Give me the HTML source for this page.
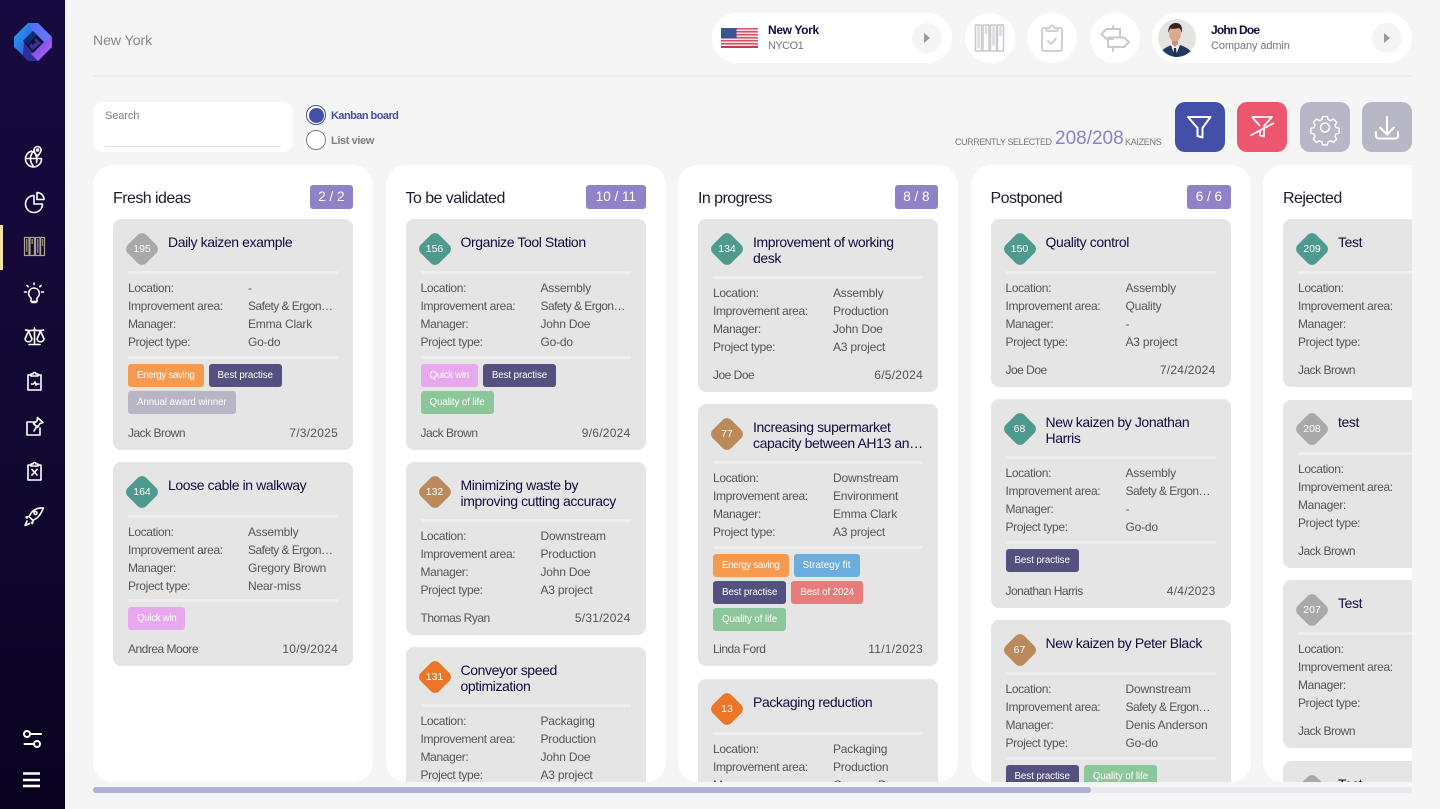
<!DOCTYPE html>
<html><head><meta charset="utf-8"><style>
*{box-sizing:border-box}
html,body{margin:0;padding:0}
body{width:1440px;height:809px;overflow:hidden;background:#f5f5f5;position:relative;font-family:"Liberation Sans",sans-serif;color:#555}
.a{position:absolute;white-space:nowrap}
.side{left:0;top:0;width:65px;height:809px;background:linear-gradient(180deg,#170a40 0%,#120833 50%,#090220 100%)}
.pill{position:absolute;background:#fff;border-radius:25px;height:50px;top:13px}
.arr{position:absolute;width:30px;height:30px;border-radius:50%;background:#f5f5f5;top:23px}
.arr:after{content:"";position:absolute;left:12px;top:10px;border-left:6px solid #999;border-top:5px solid transparent;border-bottom:5px solid transparent}
.n{font-weight:bold;font-size:12px;color:#15093f;letter-spacing:-.35px;line-height:14px}
.s{font-size:11px;color:#777;letter-spacing:-.1px;line-height:14px}
.btn{position:absolute;top:102px;width:50px;height:50px;border-radius:10px}
.clip{position:absolute;left:93px;top:165px;width:1319px;height:617px;overflow:hidden}
.col{position:absolute;top:0;width:280px;height:617px;background:#fff;border-radius:20px}
.h{position:absolute;left:20px;top:24px;font-size:16px;line-height:20px;color:#1c1c2c;letter-spacing:-.55px;white-space:nowrap}
.cnt{position:absolute;top:20px;right:20px;height:24px;line-height:24px;padding:0 8.5px;background:#8f82c6;color:#fff;font-size:13.5px;border-radius:3px;white-space:nowrap}
.c{position:absolute;left:20px;width:240px;background:#e5e5e5;border-radius:8px;padding:0 15px 8px}
.hd{height:52px;position:relative}
.hd.t2{height:57px}
.hd.x{height:53px}
.x+.d+.rows{padding-bottom:4px}
.b{position:absolute;left:1px;top:17px;width:26px;height:26px;border-radius:6px;transform:rotate(45deg)}
.bn{position:absolute;left:-3px;top:23px;width:34px;text-align:center;font-size:10.5px;line-height:14px;color:#fff}
.tt{position:absolute;left:40px;top:15px;font-size:14px;line-height:16px;color:#15093f;letter-spacing:-.4px;white-space:nowrap}
.d{height:3px;background:#eeeeee}
.rows{padding:5px 0;font-size:12px;line-height:18px;color:#555;letter-spacing:-.35px}
.rows div{position:relative;height:18px;white-space:nowrap}
.rows i{font-style:normal;position:absolute;left:120px;top:0;letter-spacing:-.2px}
.rows i.e{letter-spacing:-.55px}
.tags{padding-top:5px;font-size:0}
.tag{display:inline-block;height:23px;line-height:23px;padding:0 9px;margin:0 5px 4px 0;border-radius:3px;color:#fff;font-size:9.8px;letter-spacing:-.1px;vertical-align:top;white-space:nowrap}
.ft{display:flex;justify-content:space-between;font-size:12px;line-height:18px;color:#555;letter-spacing:-.5px;margin-top:5px;white-space:nowrap}
.ft span+span{letter-spacing:.25px}
.tags+.ft{margin-top:6px}
.grey{background:#a9a9a9}.green{background:#4f9a8e}.brown{background:#bb8a5b}.or{background:#ec7527}
.o{background:#f69a50;letter-spacing:-.35px}.p{background:#54507f}.g{background:#b8b5c6}.k{background:#e8a8ee;letter-spacing:-.35px}.q{background:#8cc79a}.u{background:#6badde;letter-spacing:.1px}.r{background:#e87b7c}
</style></head><body>

<div class="a side"></div>
<div class="a" style="left:0;top:225px;width:3px;height:45px;background:#f3e3a6"></div>
<svg class="a" style="left:0;top:0" width="65" height="809" viewBox="0 0 65 809" fill="none" stroke="#fff" stroke-width="1.6" stroke-linecap="round" stroke-linejoin="round">
<defs>
<linearGradient id="l1" x1="0" y1="0" x2="1" y2="1"><stop offset="0" stop-color="#2aa6f7"/><stop offset="1" stop-color="#2b50d0"/></linearGradient>
<linearGradient id="l2" x1="0" y1="0" x2="1" y2="1"><stop offset="0" stop-color="#5a50e0"/><stop offset="1" stop-color="#c060f5"/></linearGradient>
<linearGradient id="l3" x1="0" y1="0" x2="1" y2="1"><stop offset="0" stop-color="#4f6cf5"/><stop offset="1" stop-color="#6f7cf8"/></linearGradient>
</defs>
<g stroke="none">
<path d="M28 23H38L52 37V47L38 61H28L14 47V37Z" fill="#2b2f9c"/>
<path d="M28 23L14 37V47L23 55L24 41L33 32L30 24Z" fill="url(#l1)"/>
<path d="M28 23H38L52 37L44 44L33 32Z" fill="url(#l3)"/>
<path d="M52 37V47L38 61L31 54L44 41Z" fill="url(#l2)"/>
<path d="M23 41L33 31L44 42L33 53Z" fill="#12103a"/>
<path d="M23 41L33 31L37 35L28 45Z" fill="#0d2a70"/>
<path d="M36 38L41 43L33 50L29 46Z" fill="#3f2f9a"/>
<path d="M30 42L33 39L36 42L33 45Z" fill="#12103a"/>
</g>
<path d="M31.500 151.200a8 8 0 1 0 10 7.800M26 158.500h15.500M33.500 151c-4 5-4 10.500 0 15.500M33.500 151c3 4 4 8 3 11.500"/>
<path d="M37.500 146.500a3.500 3.500 0 0 1 3.500 3.500c0 2.500-3.500 6-3.500 6s-3.500-3.500-3.500-6a3.500 3.500 0 0 1 3.500-3.500z" fill="#140a3a"/>
<circle cx="37.500" cy="150" r="1"/>
<path d="M34 195.500a8.500 8.500 0 1 0 8.500 8.500h-8.500z"/>
<path d="M37 192.500a7 7 0 0 1 7 7h-7z"/>
<g stroke="#aca290" stroke-width="1.200" stroke-linecap="butt"><rect x="24.500" y="237.500" width="4.500" height="18"/><rect x="30" y="237.500" width="4.500" height="18"/><rect x="35.500" y="237.500" width="4.500" height="18"/><rect x="40.500" y="237.500" width="4" height="18"/><path d="M26.700 239v13M32.200 239v5M37.700 239v14M42.500 239v7" stroke="#8b8378" stroke-width="1.500"/></g>
<path d="M34 288a5.500 5.500 0 0 0-3 10v3.500h6V298a5.500 5.500 0 0 0-3-10zM32 302.500h4M34 283v1.500M27 285.500l1.200 1.200M41 285.500l-1.200 1.200M24.500 292h2M41.500 292h2"/>
<path d="M34.500 328v16M29 344.500h11M25.500 330c3 .8 6 .8 9 0 3 .8 6 .8 9 0M28.500 331l-3.500 8a3.600 3.600 0 0 0 7 0zM40.500 331l-3.500 8a3.600 3.600 0 0 0 7 0z"/>
<path d="M31 375h-3v15h13v-15h-3M31 376v-2h2a1.500 1.500 0 0 1 3 0h2v2zM31.500 384h2l1.500-2 1 3 1-1h2"/>
<path d="M36 422h-9v13h13v-7M34 431l3-5M37.500 417.500l5.500 5-3 1-2.500 4-4-4 3.500-2.500z"/>
<path d="M31 465h-3v15h13v-15h-3M31 466v-2h2a1.500 1.500 0 0 1 3 0h2v2zM32 469.500l5 5.500M37 469.500l-5 5.500"/>
<path d="M43.500 508c-5-.5-9 1-12 4.500l-2.500 4 4 4 4-2.500c3.500-3 5-7 6.500-10zM29 516.500l-3 .5 1 1M33 520.500l-.5 3-1-1M27 521l-2 4.500 4.500-2M37 513a1.500 1.500 0 1 0 0 .01"/>
<g stroke-width="2"><circle cx="27" cy="734" r="3"/><path d="M30.500 734H41"/><circle cx="37" cy="744" r="3"/><path d="M24.500 744H33.500"/></g>
<g stroke-width="2.500" stroke-linecap="butt"><path d="M23 773.500h17M23 780h17M23 786h17"/></g>
</svg>

<div class="a" style="left:93px;top:31px;font-size:14px;line-height:18px;color:#888">New York</div>
<div class="a" style="left:93px;top:75px;width:1319px;height:2px;background:#ebebf0"></div>

<div class="pill" style="left:712px;width:240px"></div>
<svg class="a" style="left:721px;top:28px" width="37" height="20" viewBox="0 0 37 20">
<rect width="37" height="20" fill="#f6dfe2"/>
<g fill="#cf5468"><rect y="0" width="37" height="1.500"/><rect y="3" width="37" height="1.500"/><rect y="6" width="37" height="1.500"/><rect y="9" width="37" height="1.500"/><rect y="12" width="37" height="1.500"/><rect y="15" width="37" height="1.500"/><rect y="18" width="37" height="2" fill="#c03c52"/></g>
<rect width="15.500" height="10.500" fill="#3b5590"/>
</svg>
<div class="a n" style="left:768px;top:23px">New York</div>
<div class="a s" style="left:768px;top:39px;letter-spacing:-.55px">NYCO1</div>
<div class="arr" style="left:912px"></div>

<div class="pill" style="left:965px;width:50px"></div>
<div class="pill" style="left:1027px;width:50px"></div>
<div class="pill" style="left:1090px;width:50px"></div>
<svg class="a" style="left:965px;top:13px" width="175" height="50" viewBox="0 0 175 50" fill="none" stroke="#c9c9cf" stroke-width="1.500" stroke-linecap="round" stroke-linejoin="round">
<rect x="10.500" y="12" width="6" height="26"/><rect x="18" y="12" width="6" height="26"/><rect x="25.500" y="12" width="6" height="26"/><rect x="32.500" y="12" width="6" height="26"/>
<g stroke-width="2.500" stroke="#dcdce0"><path d="M13.500 14v20M21 14v6M28.500 14v18M35.500 14v8"/></g>
<path d="M81.500 15h-2.500a2 2 0 0 0-2 2v19a2 2 0 0 0 2 2h16a2 2 0 0 0 2-2V17a2 2 0 0 0-2-2H92.500M81.500 18v-3h3a2.500 2.500 0 0 1 5 0h3v3zM83 28l3 3 5-5.500" stroke-width="1.800"/>
<path d="M148 13v3M148 34v4M155 24v-8h-13.500l-5 5 5 5H148M143 24.500h16l5 4.750-5 4.750H143z" stroke-width="2"/>
</svg>

<div class="pill" style="left:1152px;width:260px"></div>
<svg class="a" style="left:1158px;top:19px" width="38" height="38" viewBox="0 0 38 38">
<clipPath id="av"><circle cx="19" cy="19" r="19"/></clipPath>
<g clip-path="url(#av)">
<rect width="38" height="38" fill="#e6e4e0"/>
<g transform="translate(-2 0)">
<path d="M3 38c1-7 7-10 13-12h8c6 2 12 5 13 12z" fill="#1f3c60"/>
<path d="M15 26l4 12 5-12-2-3h-6z" fill="#f2f2f2"/>
<path d="M18 29h2l1 9h-4z" fill="#232b45"/>
<path d="M16 20h6v5l-3 3-3-3z" fill="#c98f75"/>
<ellipse cx="19" cy="15" rx="6" ry="7.500" fill="#dca98d"/>
<path d="M12.500 14c-1-6 2.500-10 7.500-10s7 4 5.500 10c-.5-3-1.500-4.500-3-5-3 1-6 1-8 .5-1 1-1.500 2.500-2 4.500z" fill="#33261e"/>
</g>
</g></svg>
<div class="a n" style="left:1211px;top:23px;letter-spacing:-.8px">John Doe</div>
<div class="a s" style="left:1211px;top:39px">Company admin</div>
<div class="arr" style="left:1372px"></div>

<div class="a" style="left:93px;top:102px;width:200px;height:50px;background:#fff;border-radius:10px"></div>
<div class="a" style="left:105px;top:109px;font-size:11px;line-height:14px;color:#808080;letter-spacing:-.1px">Search</div>
<div class="a" style="left:105px;top:146px;width:176px;height:1px;background:#e2e2e2"></div>
<div class="a" style="left:306px;top:105px;width:20px;height:20px;border-radius:50%;border:1px solid #4250a8;background:#fff"></div>
<div class="a" style="left:308.5px;top:107.5px;width:15px;height:15px;border-radius:50%;background:#4250a8"></div>
<div class="a" style="left:331px;top:109px;font-size:11px;line-height:14px;font-weight:bold;color:#4250a8;letter-spacing:-.55px">Kanban board</div>
<div class="a" style="left:306px;top:130px;width:20px;height:20px;border-radius:50%;border:1px solid #808080;background:#fff"></div>
<div class="a" style="left:331px;top:134px;font-size:11px;line-height:14px;font-weight:bold;color:#808080;letter-spacing:-.4px">List view</div>

<div class="a" style="left:955px;top:136px;font-size:9px;line-height:12px;color:#777;letter-spacing:-.42px">CURRENTLY SELECTED</div>
<div class="a" style="left:1055px;top:128px;font-size:19px;line-height:22px;color:#8c80c8">208/208</div>
<div class="a" style="left:1125px;top:136px;font-size:9px;line-height:12px;color:#777;letter-spacing:-.3px">KAIZENS</div>

<div class="btn" style="left:1175px;background:#4250a8"></div>
<div class="btn" style="left:1237px;background:#ec566f"></div>
<div class="btn" style="left:1300px;background:#b8b7c8"></div>
<div class="btn" style="left:1362px;background:#b8b7c8"></div>
<svg class="a" style="left:1175px;top:102px" width="237" height="50" viewBox="0 0 237 50" fill="none" stroke="#fff" stroke-width="2" stroke-linejoin="round" stroke-linecap="round">
<path d="M13 15h22.500L27.500 26v9.500l-5-1.500v-8z"/>
<g stroke-width="1.700" stroke-linecap="butt"><path d="M77 15h20l-8 9v10.500l-4-1V29M85 24l-8-9M75.500 33.500L99 21"/></g>
<g transform="translate(150 25.500)" stroke-width="1.500"><circle r="4.500"/><path d="M-2.500-11.500h5l.8 3.200 2.600 1.100 2.900-1.700 3.500 3.500-1.700 2.900 1.100 2.600 3.200.8v5l-3.200.8-1.100 2.600 1.700 2.900-3.500 3.500-2.900-1.700-2.600 1.100-.8 3.200h-5l-.8-3.200-2.600-1.100-2.900 1.700-3.500-3.500 1.700-2.900-1.100-2.600-3.200-.8v-5l3.200-.8 1.100-2.600-1.700-2.900 3.500-3.500 2.900 1.700 2.600-1.100z" transform="scale(.95)"/></g>
<path d="M212 15v17M205 25.500l7 7 7-7M201 30v4a2.500 2.500 0 0 0 2.500 2.500h17a2.500 2.500 0 0 0 2.500-2.500v-4"/>
</svg>

<div class="clip">

<div class="col" style="left:0">
<div class="h">Fresh ideas</div><div class="cnt">2 / 2</div>
<div class="c" style="top:54px"><div class="hd"><div class="b grey"></div><div class="bn">195</div><div class="tt">Daily kaizen example</div></div><div class="d"></div>
<div class="rows"><div>Location:<i>-</i></div><div>Improvement area:<i class="e">Safety &amp; Ergon…</i></div><div>Manager:<i>Emma Clark</i></div><div>Project type:<i>Go-do</i></div></div><div class="d"></div>
<div class="tags"><span class="tag o">Energy saving</span><span class="tag p">Best practise</span><span class="tag g">Annual award winner</span></div>
<div class="ft"><span>Jack Brown</span><span>7/3/2025</span></div></div>
<div class="c" style="top:297px"><div class="hd x"><div class="b green"></div><div class="bn">164</div><div class="tt">Loose cable in walkway</div></div><div class="d"></div>
<div class="rows"><div>Location:<i>Assembly</i></div><div>Improvement area:<i class="e">Safety &amp; Ergon…</i></div><div>Manager:<i>Gregory Brown</i></div><div>Project type:<i>Near-miss</i></div></div><div class="d"></div>
<div class="tags"><span class="tag k">Quick win</span></div>
<div class="ft"><span>Andrea Moore</span><span>10/9/2024</span></div></div>
</div>

<div class="col" style="left:292.5px">
<div class="h">To be validated</div><div class="cnt" style="padding:0 9.5px">10 / 11</div>
<div class="c" style="top:54px"><div class="hd"><div class="b green"></div><div class="bn">156</div><div class="tt">Organize Tool Station</div></div><div class="d"></div>
<div class="rows"><div>Location:<i>Assembly</i></div><div>Improvement area:<i class="e">Safety &amp; Ergon…</i></div><div>Manager:<i>John Doe</i></div><div>Project type:<i>Go-do</i></div></div><div class="d"></div>
<div class="tags"><span class="tag k">Quick win</span><span class="tag p">Best practise</span><span class="tag q">Quality of life</span></div>
<div class="ft"><span>Jack Brown</span><span>9/6/2024</span></div></div>
<div class="c" style="top:297px"><div class="hd t2"><div class="b brown"></div><div class="bn">132</div><div class="tt">Minimizing waste by<br>improving cutting accuracy</div></div><div class="d"></div>
<div class="rows"><div>Location:<i>Downstream</i></div><div>Improvement area:<i>Production</i></div><div>Manager:<i>John Doe</i></div><div>Project type:<i>A3 project</i></div></div>
<div class="ft"><span>Thomas Ryan</span><span>5/31/2024</span></div></div>
<div class="c" style="top:482px"><div class="hd t2"><div class="b or"></div><div class="bn">131</div><div class="tt">Conveyor speed<br>optimization</div></div><div class="d"></div>
<div class="rows"><div>Location:<i>Packaging</i></div><div>Improvement area:<i>Production</i></div><div>Manager:<i>John Doe</i></div><div>Project type:<i>A3 project</i></div></div>
<div class="ft"><span>Thomas Ryan</span><span>5/31/2024</span></div></div>
</div>

<div class="col" style="left:585px">
<div class="h">In progress</div><div class="cnt">8 / 8</div>
<div class="c" style="top:54px"><div class="hd t2"><div class="b green"></div><div class="bn">134</div><div class="tt">Improvement of working<br>desk</div></div><div class="d"></div>
<div class="rows"><div>Location:<i>Assembly</i></div><div>Improvement area:<i>Production</i></div><div>Manager:<i>John Doe</i></div><div>Project type:<i>A3 project</i></div></div>
<div class="ft"><span>Joe Doe</span><span>6/5/2024</span></div></div>
<div class="c" style="top:239px"><div class="hd t2"><div class="b brown"></div><div class="bn">77</div><div class="tt">Increasing supermarket<br>capacity between AH13 an…</div></div><div class="d"></div>
<div class="rows"><div>Location:<i>Downstream</i></div><div>Improvement area:<i>Environment</i></div><div>Manager:<i>Emma Clark</i></div><div>Project type:<i>A3 project</i></div></div><div class="d"></div>
<div class="tags"><span class="tag o">Energy saving</span><span class="tag u">Strategy fit</span><span class="tag p">Best practise</span><span class="tag r">Best of 2024</span><span class="tag q">Quality of life</span></div>
<div class="ft" style="margin-top:5px"><span>Linda Ford</span><span>11/1/2023</span></div></div>
<div class="c" style="top:514px"><div class="hd x"><div class="b or"></div><div class="bn">13</div><div class="tt">Packaging reduction</div></div><div class="d"></div>
<div class="rows"><div>Location:<i>Packaging</i></div><div>Improvement area:<i>Production</i></div><div>Manager:<i>Gregory Brown</i></div><div>Project type:<i>A3 project</i></div></div>
<div class="ft"><span>Joe Doe</span><span>6/5/2024</span></div></div>
</div>

<div class="col" style="left:877.5px">
<div class="h">Postponed</div><div class="cnt">6 / 6</div>
<div class="c" style="top:54px"><div class="hd"><div class="b green"></div><div class="bn">150</div><div class="tt">Quality control</div></div><div class="d"></div>
<div class="rows"><div>Location:<i>Assembly</i></div><div>Improvement area:<i>Quality</i></div><div>Manager:<i>-</i></div><div>Project type:<i>A3 project</i></div></div>
<div class="ft"><span>Joe Doe</span><span>7/24/2024</span></div></div>
<div class="c" style="top:234px"><div class="hd t2"><div class="b green"></div><div class="bn">68</div><div class="tt">New kaizen by Jonathan<br>Harris</div></div><div class="d"></div>
<div class="rows"><div>Location:<i>Assembly</i></div><div>Improvement area:<i class="e">Safety &amp; Ergon…</i></div><div>Manager:<i>-</i></div><div>Project type:<i>Go-do</i></div></div><div class="d"></div>
<div class="tags"><span class="tag p">Best practise</span></div>
<div class="ft"><span>Jonathan Harris</span><span>4/4/2023</span></div></div>
<div class="c" style="top:455px"><div class="hd"><div class="b brown"></div><div class="bn">67</div><div class="tt">New kaizen by Peter Black</div></div><div class="d"></div>
<div class="rows"><div>Location:<i>Downstream</i></div><div>Improvement area:<i class="e">Safety &amp; Ergon…</i></div><div>Manager:<i>Denis Anderson</i></div><div>Project type:<i>Go-do</i></div></div><div class="d"></div>
<div class="tags"><span class="tag p">Best practise</span><span class="tag q">Quality of life</span></div>
<div class="ft"><span>Denis Anderson</span><span>4/4/2023</span></div></div>
</div>

<div class="col" style="left:1170px">
<div class="h">Rejected</div>
<div class="c" style="top:54px"><div class="hd"><div class="b green"></div><div class="bn">209</div><div class="tt">Test</div></div><div class="d"></div>
<div class="rows"><div>Location:</div><div>Improvement area:</div><div>Manager:</div><div>Project type:</div></div>
<div class="ft"><span>Jack Brown</span></div></div>
<div class="c" style="top:235px"><div class="hd" style="top:-1px;margin-bottom:-1px;height:53px"><div class="b grey"></div><div class="bn">208</div><div class="tt">test</div></div><div class="d" style="margin-top:0"></div>
<div class="rows"><div>Location:</div><div>Improvement area:</div><div>Manager:</div><div>Project type:</div></div>
<div class="ft"><span>Jack Brown</span></div></div>
<div class="c" style="top:415px"><div class="hd"><div class="b grey"></div><div class="bn">207</div><div class="tt">Test</div></div><div class="d"></div>
<div class="rows"><div>Location:</div><div>Improvement area:</div><div>Manager:</div><div>Project type:</div></div>
<div class="ft"><span>Jack Brown</span></div></div>
<div class="c" style="top:596px"><div class="hd"><div class="b grey"></div><div class="bn">206</div><div class="tt">Test</div></div><div class="d"></div></div>
</div>

</div>

<div class="a" style="left:93px;top:787px;width:1319px;height:6px;border-radius:3px;background:#e9e8ef"></div>
<div class="a" style="left:93px;top:787px;width:998px;height:6px;border-radius:3px;background:#b0b0d6"></div>

</body></html>
